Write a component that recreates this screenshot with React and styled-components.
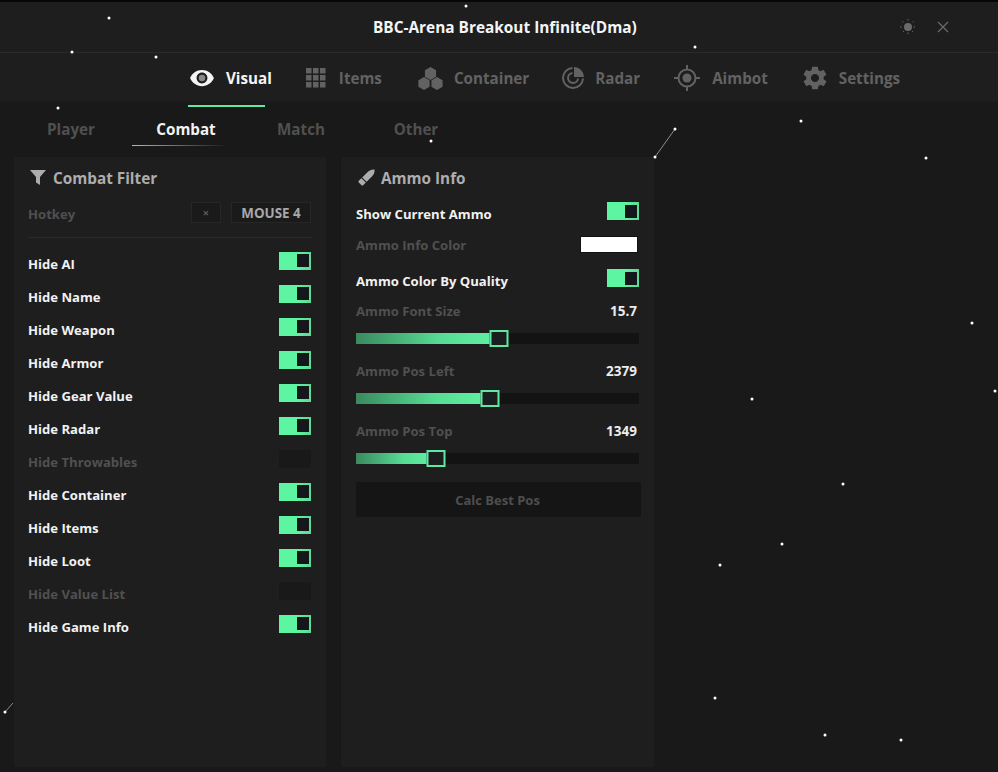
import React from 'react';
import styled, { createGlobalStyle } from 'styled-components';
import { IoMdSettings } from 'react-icons/io';

const GlobalStyle = createGlobalStyle`
  html, body {
    margin: 0;
    padding: 0;
    background: #191919;
    font-family: 'Open Sans', 'Noto Sans', sans-serif;
    font-weight: 700;
  }
  * { box-sizing: border-box; }
`;

const Shell = styled.div`
  position: relative;
  width: 998px;
  height: 772px;
  overflow: hidden;
  background: #191919;
`;

const TitleBar = styled.header`
  display: flex;
  align-items: center;
  height: 53px;
  padding: 0 49px 0 373px;
  border-top: 2px solid #060606;
  border-bottom: 1px solid #2a2a2a;
  background: #1e1e1f;
`;

const Title = styled.h1`
  margin: 0;
  font-size: 15.4px;
  font-weight: 700;
  color: #f5f5f5;
  white-space: nowrap;
`;

const WindowControls = styled.div`
  display: flex;
  align-items: center;
  gap: 21px;
  margin-left: auto;
  color: #6a6a6a;
`;

const Nav = styled.nav`
  display: flex;
  height: 54px;
  padding: 0 0 4px 188px;
  background: linear-gradient(#1e1e1f 88%, #191919 92%);
`;

const NavItem = styled.div`
  position: relative;
  display: flex;
  align-items: center;
  gap: ${p => p.$gap}px;
  margin-left: ${p => p.$left}px;
  font-size: 15.2px;
  color: ${p => (p.$active ? '#f5f5f5' : '#626262')};
`;

const NavLine = styled.span`
  position: absolute;
  left: -1px;
  bottom: -4px;
  width: 77px;
  height: 2px;
  background: #5ee8a0;
`;

const SubTabs = styled.div`
  display: grid;
  grid-template-columns: repeat(4, 115px);
  height: 40px;
  padding-left: 13.5px;
`;

const SubTab = styled.div`
  position: relative;
  display: flex;
  align-items: center;
  justify-content: center;
  padding-top: 4px;
  font-size: 15.2px;
  color: ${p => (p.$active ? '#f2f2f2' : '#505050')};
`;

const SubLine = styled.span`
  position: absolute;
  left: 3px;
  bottom: 1px;
  width: 95px;
  height: 1px;
  background: linear-gradient(90deg, #5ee8a0, #2c5a42 70%, transparent);
`;

const Panels = styled.main`
  display: flex;
  gap: 15px;
  margin: 10px 0 0 14px;
`;

const Panel = styled.section`
  width: ${p => p.$w}px;
  height: 610px;
  padding: 0 ${p => p.$pad}px;
  background: #1e1e1f;
  border-radius: 2px;
`;

const PanelTitle = styled.div`
  display: flex;
  align-items: center;
  gap: ${p => p.$gap}px;
  height: 42px;
  padding: 0 0 1px 2px;
  font-size: 15.3px;
  color: #adadad;
`;

const Row = styled.div`
  display: flex;
  align-items: center;
  justify-content: space-between;
  height: ${p => p.$h}px;
  margin-top: ${p => p.$top || 0}px;
  font-size: 13.1px;
  color: ${p => (p.$dim ? '#505050' : '#f2f2f2')};
`;

const Value = styled.span`
  padding-right: 2px;
  font-size: 13.5px;
  color: #ececec;
`;

const HotkeyButtons = styled.div`
  display: flex;
  gap: 10px;
  margin-top: -3px;
  margin-right: 1px;
`;

const KeyBox = styled.div`
  display: flex;
  align-items: center;
  justify-content: center;
  width: ${p => p.$w}px;
  height: 21px;
  border: 1px solid #262626;
  background: #1a1a1b;
  font-size: ${p => (p.$small ? 11 : 13.4)}px;
  color: ${p => (p.$small ? '#5c5c5c' : '#a8a8a8')};
`;

const Divider = styled.div`
  height: 1px;
  margin: 8px -1px 9px 0;
  background: #292929;
`;

const Toggle = styled.div`
  display: flex;
  align-items: center;
  justify-content: flex-end;
  width: 32px;
  height: 18px;
  margin-top: -6px;
  margin-right: ${p => p.$right || 0}px;
  padding-right: 2px;
  background: ${p => (p.$on ? 'linear-gradient(90deg, #5ef5a2 55%, #5ed898)' : '#191919')};
`;

const Knob = styled.span`
  width: 12px;
  height: 13px;
  background: #15181a;
`;

const Swatch = styled.div`
  width: 56px;
  height: 15px;
  margin: -1px 2px 0 0;
  background: #ffffff;
  box-shadow: 0 0 0 1px #121212;
`;

const Track = styled.div`
  position: relative;
  height: 11px;
  margin-top: 12px;
  background: #131313;
`;

const Fill = styled.div`
  height: 100%;
  background: linear-gradient(90deg, #3a8a5e, #57dc95 60%, #60f2a3);
`;

const Thumb = styled.span`
  position: absolute;
  top: -3px;
  width: 19px;
  height: 17px;
  transform: translateX(-50%);
  border: 2px solid #5ee8a0;
  background: #1b1e1e;
`;

const CalcButton = styled.button`
  display: block;
  width: 285px;
  height: 35px;
  margin-top: 18px;
  padding: 0 2px 0 0;
  border: 0;
  border-radius: 2px;
  background: #151515;
  font: inherit;
  font-size: 13px;
  color: #4e4e4e;
`;

const Sky = styled.svg`
  position: absolute;
  inset: 0;
  pointer-events: none;
`;

const EyeIcon = () => (
  <svg width="26" height="26" viewBox="0 0 24 24" fill="currentColor">
    <path fillRule="evenodd" d="M12 4.5C7 4.5 2.73 7.61 1 12c1.73 4.39 6 7.5 11 7.5s9.27-3.11 11-7.5c-1.73-4.39-6-7.5-11-7.5zM12 17c-2.76 0-5-2.24-5-5s2.24-5 5-5 5 2.24 5 5-2.24 5-5 5z" />
    <circle cx="12" cy="12" r="3" fill="#8a8a8a" />
  </svg>
);

const GridIcon = () => (
  <svg width="20" height="20" viewBox="0 0 20 20" fill="currentColor">
    {[0, 7, 14].flatMap(y => [0, 7, 14].map(x => <rect key={`${x}-${y}`} x={x} y={y} width="5.5" height="5.5" />))}
  </svg>
);

const hex = (x, y) => `M${x} ${y - 6.5}l5.6 3.2v6.6l-5.6 3.2-5.6-3.2v-6.6z`;

const HexIcon = () => (
  <svg width="25" height="23" viewBox="0 0 25 23" fill="currentColor">
    <path d={hex(12.5, 6.5)} />
    <path d={hex(6, 16.5)} />
    <path d={hex(19, 16.5)} />
  </svg>
);

const RadarIcon = () => (
  <svg width="24" height="24" viewBox="0 0 24 24" fill="none" stroke="currentColor" strokeWidth="2">
    <path d="M11.5 2A10 10 0 1 0 22 12.5" />
    <path d="M11.5 7A5 5 0 1 0 17 12.5" />
    <path d="M13 1A10 10 0 0 1 23 11H13z" fill="currentColor" stroke="none" />
  </svg>
);

const TargetIcon = () => (
  <svg width="26" height="26" viewBox="0 0 26 26" fill="none" stroke="currentColor" strokeWidth="2">
    <circle cx="13" cy="13" r="8.5" />
    <circle cx="13" cy="13" r="4.5" fill="currentColor" stroke="none" />
    <path d="M13 0v4.5M13 21.5V26M0 13h4.5M21.5 13H26" />
  </svg>
);

const FilterIcon = () => (
  <svg width="16" height="15" viewBox="0 0 16 15" fill="currentColor">
    <path d="M0 0h16l-6 7v8l-4-2.5V7z" />
  </svg>
);

const BulletIcon = () => (
  <svg width="17" height="17" viewBox="0 0 17 17" fill="currentColor">
    <path d="M16.5.5c.3 2.6-.6 5-2.4 6.8L8.6 12.8 4.2 8.4 9.7 2.9C11.5 1.1 13.9.2 16.5.5z" />
    <path d="M3.4 9.2l4.4 4.4-2.6 2.6c-.5.5-1.2.5-1.7 0L.8 13.5c-.5-.5-.5-1.2 0-1.7z" />
  </svg>
);

const SunIcon = () => (
  <svg width="16" height="16" viewBox="0 0 16 16" fill="currentColor" stroke="currentColor">
    <circle cx="8" cy="8" r="4" stroke="none" />
    <path strokeWidth="1" strokeDasharray="1.5 1" d="M8 0v2.5M8 13.5V16M0 8h2.5M13.5 8H16M2.3 2.3l1.6 1.6M12.1 12.1l1.6 1.6M13.7 2.3l-1.6 1.6M3.9 12.1l-1.6 1.6" />
  </svg>
);

const CloseIcon = () => (
  <svg width="12" height="12" viewBox="0 0 12 12" fill="none" stroke="currentColor" strokeWidth="1.2">
    <path d="M1 1l10 10M11 1L1 11" />
  </svg>
);

const navItems = [
  { label: 'Visual', icon: <EyeIcon />, left: 1, gap: 11, active: true },
  { label: 'Items', icon: <GridIcon />, left: 34, gap: 13 },
  { label: 'Container', icon: <HexIcon />, left: 36, gap: 11 },
  { label: 'Radar', icon: <RadarIcon />, left: 32, gap: 10 },
  { label: 'Aimbot', icon: <TargetIcon />, left: 34, gap: 12 },
  { label: 'Settings', icon: <IoMdSettings size={28} />, left: 33, gap: 10 },
];

const subTabs = ['Player', 'Combat', 'Match', 'Other'];

const filters = [
  ['Hide AI', true],
  ['Hide Name', true],
  ['Hide Weapon', true],
  ['Hide Armor', true],
  ['Hide Gear Value', true],
  ['Hide Radar', true],
  ['Hide Throwables', false],
  ['Hide Container', true],
  ['Hide Items', true],
  ['Hide Loot', true],
  ['Hide Value List', false],
  ['Hide Game Info', true],
];

const sliders = [
  { label: 'Ammo Font Size', value: '15.7', pct: 50.4, top: 0 },
  { label: 'Ammo Pos Left', value: '2379', pct: 47.5, top: 17 },
  { label: 'Ammo Pos Top', value: '1349', pct: 28.1, top: 17 },
];

const stars = [
  [109, 18], [72, 52], [156, 57], [466, 6], [695, 47], [58, 108], [431, 141],
  [675, 129], [655, 157], [801, 121], [926, 158], [972, 323], [995, 391],
  [752, 399], [843, 484], [782, 544], [720, 565], [715, 698], [825, 735],
  [901, 740], [5, 712],
];

const Switch = ({ on, right }) => (
  <Toggle $on={on} $right={right}>{on && <Knob />}</Toggle>
);

export default function App() {
  return (
    <Shell>
      <GlobalStyle />
      <TitleBar>
        <Title>BBC-Arena Breakout Infinite(Dma)</Title>
        <WindowControls>
          <SunIcon />
          <CloseIcon />
        </WindowControls>
      </TitleBar>

      <Nav>
        {navItems.map(item => (
          <NavItem key={item.label} $active={item.active} $left={item.left} $gap={item.gap}>
            {item.icon}
            {item.label}
            {item.active && <NavLine />}
          </NavItem>
        ))}
      </Nav>

      <SubTabs>
        {subTabs.map(tab => (
          <SubTab key={tab} $active={tab === 'Combat'}>
            {tab}
            {tab === 'Combat' && <SubLine />}
          </SubTab>
        ))}
      </SubTabs>

      <Panels>
        <Panel $w={312} $pad={14}>
          <PanelTitle $gap={7}>
            <FilterIcon />
            Combat Filter
          </PanelTitle>
          <Row $h={30} $dim>
            Hotkey
            <HotkeyButtons>
              <KeyBox $w={30} $small>×</KeyBox>
              <KeyBox $w={80}>MOUSE 4</KeyBox>
            </HotkeyButtons>
          </Row>
          <Divider />
          {filters.map(([label, on]) => (
            <Row key={label} $h={33} $dim={!on}>
              {label}
              <Switch on={on} right={1} />
            </Row>
          ))}
        </Panel>

        <Panel $w={313} $pad={15}>
          <PanelTitle $gap={6}>
            <BulletIcon />
            Ammo Info
          </PanelTitle>
          <Row $h={30}>
            Show Current Ammo
            <Switch on />
          </Row>
          <Row $h={32} $dim>
            Ammo Info Color
            <Swatch />
          </Row>
          <Row $h={40}>
            Ammo Color By Quality
            <Switch on />
          </Row>
          {sliders.map(s => (
            <div key={s.label}>
              <Row $h={20} $top={s.top} $dim>
                {s.label}
                <Value>{s.value}</Value>
              </Row>
              <Track>
                <Fill style={{ width: `${s.pct}%` }} />
                <Thumb style={{ left: `${s.pct}%` }} />
              </Track>
            </div>
          ))}
          <CalcButton>Calc Best Pos</CalcButton>
        </Panel>
      </Panels>

      <Sky width="998" height="772" viewBox="0 0 998 772">
        <path d="M655 157L675 129M5 712L13 703" stroke="#bdbdbd" strokeWidth="0.7" />
        {stars.map(([x, y]) => <circle key={`${x}-${y}`} cx={x} cy={y} r="1.5" fill="#ffffff" />)}
      </Sky>
    </Shell>
  );
}
